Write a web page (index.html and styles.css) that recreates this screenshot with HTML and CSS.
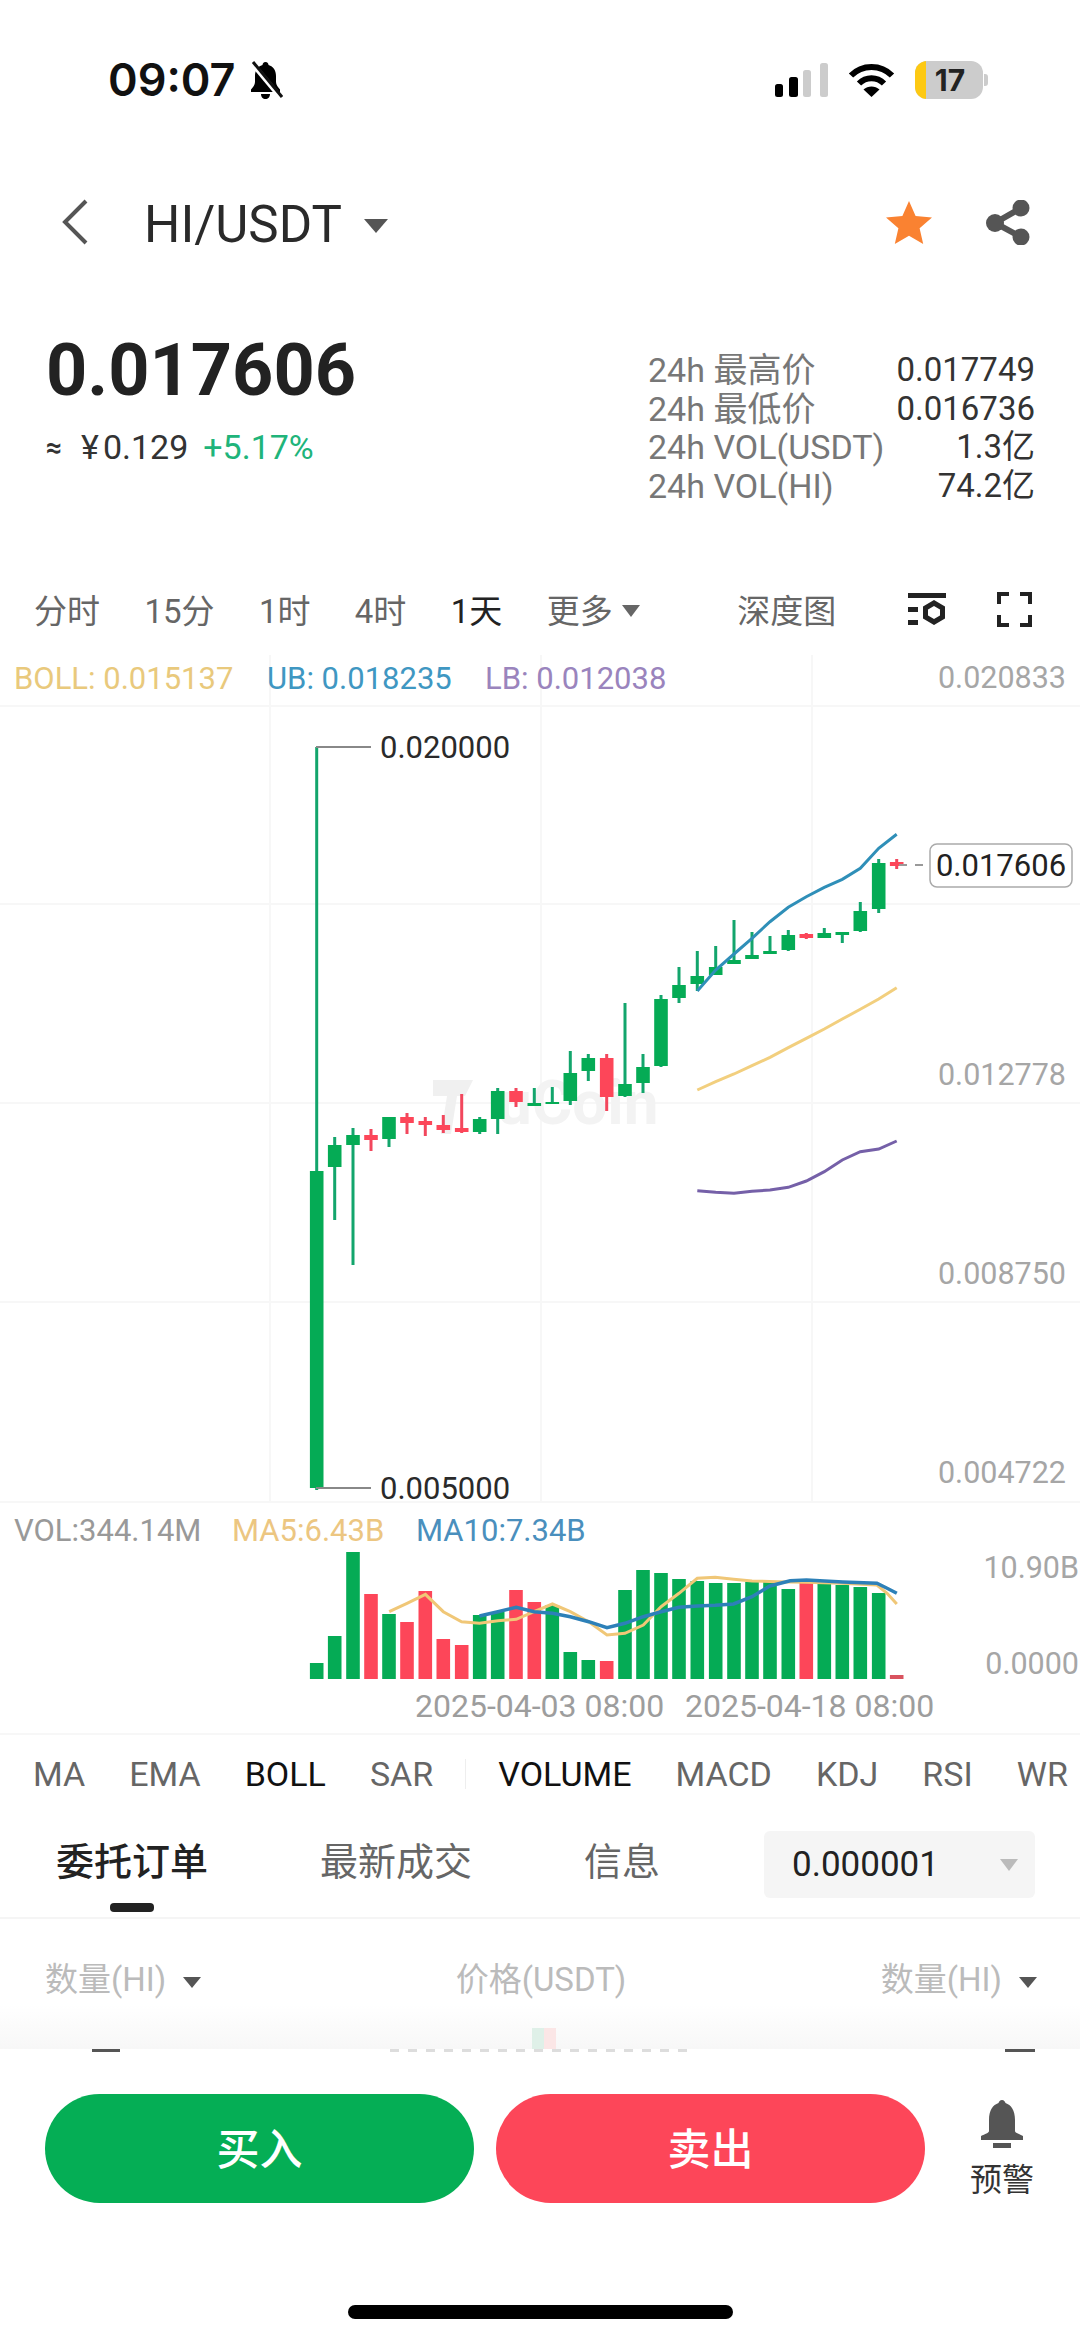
FILE: index.html
```html
<!DOCTYPE html>
<html lang="zh-CN">
<head>
  <meta charset="UTF-8">
  <meta name="viewport" content="width=device-width, initial-scale=1.0">
  <title>HI/USDT</title>
  <link rel="stylesheet" href="styles.css">
</head>
<body>
  <!-- Status bar -->
  <div class="status-bar">
    <span class="clock">09:07</span>
    <svg class="bell-off" viewBox="0 0 35 38">
      <path d="M17.5 1c2 0 3 1.500 3 3 5 1.500 7.500 5.500 7.500 11v6c0 3 2 5 4 7.500v2.500H3v-2.500C5 26 7 24 7 21v-6C7 9.500 9.500 5.500 14.500 4c0-1.500 1-3 3-3zM13 33h9c0 3-2 5-4.500 5S13 36 13 33z"/>
      <path class="bell-cut" d="M3 1l30 36"/>
      <path class="bell-line" d="M5 1l29 35"/>
    </svg>
    <div class="status-right">
      <svg class="signal" viewBox="0 0 53 34">
        <rect x="0" y="21" width="8" height="13" rx="2.500"/>
        <rect x="14" y="14" width="9" height="20" rx="2.500"/>
        <rect class="signal-off" x="28" y="7" width="8" height="27" rx="2.500"/>
        <rect class="signal-off" x="45" y="0" width="8" height="34" rx="2.500"/>
      </svg>
      <svg class="wifi" viewBox="0 0 47 34">
        <path class="wifi-arc" d="M3 12.500C14 1 33 1 44 12.500"/>
        <path class="wifi-arc" d="M11 20.500c7-7 18-7 25 0"/>
        <path d="M15.500 26.500c4.500-4 11.500-4 16 0L23.500 34z"/>
      </svg>
      <div class="battery">
        <span class="battery-level"></span>
        <span class="battery-text">17</span>
      </div>
      <span class="battery-nub"></span>
    </div>
  </div>

  <!-- Pair header -->
  <div class="nav-bar">
    <svg class="back-icon" viewBox="0 0 26 46"><path d="M24 2L3 23l21 21"/></svg>
    <span class="pair-name">HI/USDT</span>
    <span class="caret caret-pair"></span>
    <svg class="star-icon" viewBox="0 0 46 43"><path d="M23 0l6.600 15 16.400 1.500-12.400 10.800L37.200 43 23 34.700 8.800 43l3.600-15.700L0 16.500 16.400 15z"/></svg>
    <svg class="share-icon" viewBox="0 0 45 45">
      <path class="share-line" d="M35 8L9 23l26 14"/>
      <circle cx="35" cy="8" r="8.500"/>
      <circle cx="9" cy="23" r="9"/>
      <circle cx="35" cy="37" r="8.500"/>
    </svg>
  </div>

  <!-- Price summary -->
  <div class="ticker">
    <div class="ticker-main">
      <div class="last-price">0.017606</div>
      <div class="price-sub">
        <span class="approx">≈</span>
        <span class="yen">¥</span>
        <span class="cny">0.129</span>
        <span class="change">+5.17%</span>
      </div>
    </div>
    <div class="ticker-stats">
      <div class="stat-row"><span>24h 最高价</span><b>0.017749</b></div>
      <div class="stat-row"><span>24h 最低价</span><b>0.016736</b></div>
      <div class="stat-row"><span>24h VOL(USDT)</span><b>1.3亿</b></div>
      <div class="stat-row"><span>24h VOL(HI)</span><b>74.2亿</b></div>
    </div>
  </div>

  <!-- Interval tabs -->
  <div class="interval-bar">
    <span>分时</span>
    <span>15分</span>
    <span>1时</span>
    <span>4时</span>
    <span class="active">1天</span>
    <span class="more">更多<i class="caret caret-more"></i></span>
    <span class="depth-link">深度图</span>
    <svg class="tune-icon" viewBox="0 0 38 32">
      <rect x="0" y="0" width="38" height="5"/>
      <rect x="0" y="14" width="10" height="5"/>
      <rect x="0" y="27" width="10" height="5"/>
      <path class="tune-hex" d="M26 12.500l8.500 5v9l-8.500 5-8.500-5v-9z" transform="translate(0 -2.500)"/>
    </svg>
    <svg class="full-icon" viewBox="0 0 35 35">
      <path d="M2 12V2h10M23 2h10v10M33 23v10H23M12 33H2V23"/>
    </svg>
  </div>

  <!-- Price chart -->
  <svg class="price-chart" viewBox="0 650 1080 860">
    <path class="grid" d="M0 706H1080M0 904H1080M0 1103H1080M0 1302H1080M0 1502H1080M270 655V1502M541 655V1502M812 655V1502"/>

    <text class="wm-text" x="497" y="1124">uCoin</text>
    <path class="wm-logo" d="M433 1080h40l-8 16h-8l-6 38h-10l6-38h-14z"/>

    <text class="legend boll" x="14" y="678">BOLL: 0.015137</text>
    <text class="legend ub" x="267" y="678">UB: 0.018235</text>
    <text class="legend lb" x="485" y="678">LB: 0.012038</text>

    <text class="axis" x="1066" y="677">0.020833</text>
    <text class="axis" x="1066" y="1074">0.012778</text>
    <text class="axis" x="1066" y="1273">0.008750</text>
    <text class="axis" x="1066" y="1472">0.004722</text>

    <path class="wick up" d="M316.700 747V1490M334.700 1137V1220M353 1128V1265M389 1117V1147M479.700 1117V1134M497.700 1088V1134M534.300 1088V1106M552.300 1087V1104M570.300 1051V1105M588.300 1054V1081M625 1003V1097M643 1054V1093M661 995V1067M679 967V1003M697.300 951V991M715.700 946V975M734 920V964M752 932V959M770 936V954M788.300 930V951M824.300 928V938M842.300 932V943M860.300 902V932M878.700 859V913"/>
    <path class="body up" d="M316.700 1171V1488M334.700 1145V1167M353 1135V1145M389 1117V1139M479.700 1119V1132M497.700 1091V1119M534.300 1103V1106M552.300 1102V1104M570.300 1073V1101M588.300 1058V1071M625 1084V1096M643 1067V1083M661 999V1066M679 985V998M697.300 976V984M715.700 967V975M734 960V964M752 955V959M770 951V954M788.300 935V950M824.300 933V938M842.300 932V935M860.300 911V931M878.700 863V909"/>
    <path class="wick down" d="M371 1129V1151M407 1113V1134M425.300 1117V1136M443.300 1115V1133M461.700 1094V1133M516 1088V1107M606.700 1054V1111M806.300 933V939M896.700 859V869"/>
    <path class="body down" d="M371 1135V1140M407 1117V1123M425.300 1121V1125M443.300 1125V1130M461.700 1128V1132M516 1091V1102M606.700 1058V1097M806.300 934V938M896.700 862V866"/>

    <polyline class="line line-ub" points="697.300,991 715.700,970 734,954 752,938.300 770,921.700 788.300,907.300 806.300,896.700 824.300,887.300 842.300,879.300 860.300,868.300 878.700,848.300 896.700,834.300"/>
    <polyline class="line line-boll" points="697.300,1090 715.700,1081.700 734,1074 752,1065.700 770,1057.300 788.300,1047.700 806.300,1038.300 824.300,1029 842.300,1019 860.300,1009.300 878.700,999 896.700,987.700"/>
    <polyline class="line line-lb" points="697.300,1190.700 715.700,1192.300 734,1193.300 752,1191.300 770,1190 788.300,1187.300 806.300,1181 824.300,1171.700 842.300,1160 860.300,1151.700 878.700,1149 896.700,1141"/>

    <!-- high and low marks -->
    <path class="mark-line" d="M316 747H371M316 1488H371"/>
    <text class="mark-text" x="380" y="747">0.020000</text>
    <text class="mark-text" x="380" y="1488">0.005000</text>

    <!-- last price tag -->
    <path class="last-line" d="M899 865H930"/>
    <rect class="last-box" x="930" y="844" width="142" height="43" rx="7"/>
    <text class="last-text" x="1001" y="865.500">0.017606</text>
  </svg>

  <!-- Volume chart -->
  <svg class="volume-chart" viewBox="0 1510 1080 223">
    <text class="legend vol" x="14" y="1530">VOL:344.14M</text>
    <text class="legend ma5" x="232" y="1530">MA5:6.43B</text>
    <text class="legend ma10" x="416" y="1530">MA10:7.34B</text>

    <text class="axis" x="1079" y="1567">10.90B</text>
    <text class="axis" x="1079" y="1663">0.0000</text>

    <path class="bar up" d="M316.700 1663V1679M334.700 1636V1679M353 1552V1679M389 1614V1679M479.700 1615V1679M497.700 1612V1679M552.300 1605V1679M570.300 1652V1679M588.300 1660V1679M625 1590V1679M643 1570V1679M661 1573V1679M679 1579V1679M697.300 1581V1679M715.700 1583V1679M734 1583V1679M752 1582V1679M770 1582V1679M788.300 1589V1679M824.300 1584V1679M842.300 1585V1679M860.300 1587V1679M878.700 1593V1679"/>
    <path class="bar down" d="M371 1594V1679M407 1622V1679M425.300 1591V1679M443.300 1639V1679M461.700 1645V1679M516 1590V1679M534.300 1602V1679M606.700 1661V1679M806.300 1583V1679"/>
    <path class="bar last-bar" d="M896.700 1675V1679"/>

    <polyline class="line line-ma5" points="389.200,1611.700 407,1603.300 425.400,1594.300 443.300,1611.700 461.600,1621.700 479.500,1623.300 497.900,1620.700 516.200,1619.300 534.100,1611.700 552.400,1604 570.300,1611.700 588.700,1621.700 607,1635 624.900,1633.300 643.300,1625 661.100,1606.700 679,1593.300 697.300,1578.300 715.200,1577.300 733.600,1579.300 752,1581 777.400,1581.700 805.500,1582.300 841.200,1583.300 876.900,1585 887.100,1593.300 896.800,1604"/>
    <polyline class="line line-ma10" points="479.500,1616 497.900,1611.700 516.200,1607.300 534.100,1611.700 552.400,1613.300 570.300,1616.700 588.700,1621.700 607,1627.700 624.900,1623.300 643.300,1616.700 661.100,1611.700 679,1607.300 697.300,1606 715.200,1605.300 733.600,1604 752,1596.700 769.800,1586 790.200,1580.700 806.500,1580 824.400,1581 842.800,1582 876.900,1583.300 887.100,1588.300 896.800,1593.300"/>

    <text class="date" x="415" y="1706">2025-04-03 08:00</text>
    <text class="date" x="685" y="1706">2025-04-18 08:00</text>
  </svg>

  <!-- Indicator tabs -->
  <div class="indicator-bar">
    <span>MA</span>
    <span>EMA</span>
    <span class="active">BOLL</span>
    <span>SAR</span>
    <i class="indicator-sep"></i>
    <span class="active">VOLUME</span>
    <span>MACD</span>
    <span>KDJ</span>
    <span>RSI</span>
    <span>WR</span>
  </div>

  <!-- Order book -->
  <div class="book-tabs">
    <span class="book-tab active">委托订单</span>
    <span class="book-tab">最新成交</span>
    <span class="book-tab">信息</span>
    <div class="step-select">
      <span>0.000001</span>
      <i class="caret caret-step"></i>
    </div>
  </div>

  <div class="book-head">
    <span class="book-col">数量(HI)<i class="caret caret-col"></i></span>
    <span class="book-col">价格(USDT)</span>
    <span class="book-col">数量(HI)<i class="caret caret-col"></i></span>
  </div>

  <div class="book-fade">
    <i class="depth-green"></i><i class="depth-red"></i>
  </div>
  <div class="book-peek">
    <i class="peek-left"></i>
    <i class="peek-mid"></i>
    <i class="peek-right"></i>
  </div>

  <!-- Bottom actions -->
  <div class="actions">
    <button class="trade-btn buy">买入</button>
    <button class="trade-btn sell">卖出</button>
    <div class="alert">
      <svg class="alert-bell" viewBox="0 0 44 48">
        <path d="M22 0c2 0 3 1.500 3.500 3C31 5 35 10 35 20v11c0 2 4 3 8 5v4H1v-4c4-2 8-3 8-5V20C9 10 13 5 18.500 3 19 1.500 20 0 22 0z"/>
        <rect x="13" y="43" width="18" height="5"/>
      </svg>
      <span class="alert-label">预警</span>
    </div>
  </div>

  <div class="home-bar"></div>
</body>
</html>
```

FILE: styles.css
```css
* {
  box-sizing: border-box;
}

body {
  margin: 0;
  width: 1080px;
  height: 2341px;
  overflow: hidden;
  background-color: white;
  color: #222;
  font-family: Roboto, "Noto Sans CJK SC", sans-serif;
}

i {
  display: block;
}

/* Small triangle used all over the page */
.caret {
  display: inline-block;
  width: 0;
  height: 0;
  border-style: solid;
  border-color: #555 transparent transparent transparent;
}

/* Status bar */
.status-bar {
  height: 160px;
  display: flex;
  align-items: center;
  padding-left: 108px;
}

.clock {
  font-family: Inter, sans-serif;
  font-size: 45px;
  font-weight: 600;
  color: #111;
  line-height: 50px;
}

.bell-off {
  width: 35px;
  height: 38px;
  margin-left: 12px;
}

.bell-cut {
  stroke: white;
  stroke-width: 5;
}

.bell-line {
  stroke: #111;
  stroke-width: 3;
}

.status-right {
  display: flex;
  align-items: center;
  margin-left: auto;
  padding-right: 92px;
}

.signal {
  width: 53px;
  height: 34px;
}

.signal-off {
  fill: #ccc;
}

.wifi {
  width: 47px;
  height: 34px;
  margin-left: 20px;
}

.wifi-arc {
  fill: none;
  stroke: #000;
  stroke-width: 6;
}

.battery {
  position: relative;
  width: 68px;
  height: 38px;
  margin-left: 20px;
  border-radius: 12px;
  background-color: #ccc;
  overflow: hidden;
  text-align: center;
}

.battery-level {
  position: absolute;
  left: 0;
  top: 0;
  width: 11px;
  height: 100%;
  background-color: #fdc913;
}

.battery-text {
  position: relative;
  font-family: Inter, sans-serif;
  font-size: 30px;
  font-weight: 700;
  line-height: 38px;
  color: #222;
  margin-left: 2px;
}

.battery-nub {
  width: 4px;
  height: 12px;
  margin-left: 1px;
  border-radius: 0 3px 3px 0;
  background-color: #ccc;
}

/* Pair header */
.nav-bar {
  height: 124px;
  display: flex;
  align-items: center;
  padding-left: 62px;
  padding-right: 49px;
}

.back-icon {
  width: 26px;
  height: 46px;
}

.back-icon path {
  fill: none;
  stroke: #555;
  stroke-width: 4;
}

.pair-name {
  margin-left: 56px;
  margin-top: 4px;
  font-size: 51px;
  color: #2a2a2a;
}

.caret-pair {
  margin-left: 22px;
  margin-top: 8px;
  border-width: 14px 12px 0 12px;
}

.star-icon {
  width: 46px;
  height: 43px;
  margin-left: auto;
  fill: #fa8231;
}

.share-icon {
  width: 45px;
  height: 45px;
  margin-left: 54px;
  fill: #555;
}

.share-line {
  fill: none;
  stroke: #555;
  stroke-width: 6;
}

/* Price summary */
.ticker {
  height: 286px;
  display: flex;
  justify-content: space-between;
  padding: 66px 45px 0 46px;
}

.last-price {
  font-size: 72px;
  font-weight: 700;
  line-height: 42px;
  color: #222;
}

.price-sub {
  display: flex;
  align-items: center;
  height: 38px;
  margin-top: 36px;
  font-size: 34px;
  color: #333;
}

.approx {
  width: 35px;
  font-size: 28px;
  font-weight: 700;
}

.yen {
  margin-right: 4px;
}

.change {
  margin-left: 15px;
  color: #20b47a;
}

.ticker-stats {
  width: 387px;
  margin-top: 1px;
  font-size: 34px;
  line-height: 38.700px;
  color: #777;
}

.stat-row {
  display: flex;
  justify-content: space-between;
}

.stat-row b {
  font-size: 33px;
  font-weight: 400;
  color: #333;
}

/* Interval tabs */
.interval-bar {
  height: 80px;
  display: flex;
  align-items: center;
  gap: 44.400px;
  padding-left: 34px;
  padding-right: 48px;
  padding-bottom: 2px;
  font-size: 33px;
  color: #666;
}

.interval-bar .active {
  color: #222;
}

.more {
  display: flex;
  align-items: center;
}

.caret-more {
  margin-left: 9px;
  margin-top: 4px;
  border-width: 12px 9px 0 9px;
  border-top-color: #666;
}

.depth-link {
  margin-left: auto;
  margin-right: 27px;
}

.tune-icon {
  width: 38px;
  height: 32px;
  fill: #222;
  margin-right: 7px;
}

.tune-hex {
  fill: none;
  stroke: #222;
  stroke-width: 5;
}

.full-icon {
  width: 35px;
  height: 35px;
}

.full-icon path {
  fill: none;
  stroke: #222;
  stroke-width: 4;
}

/* Charts */
.price-chart {
  display: block;
  width: 1080px;
  height: 860px;
}

.volume-chart {
  display: block;
  width: 1080px;
  height: 223px;
}

.price-chart text,
.volume-chart text {
  font-family: Roboto, sans-serif;
  font-size: 31px;
  dominant-baseline: central;
}

.grid {
  fill: none;
  stroke: #f7f7f7;
  stroke-width: 2;
}

.price-chart .wm-text {
  font-size: 62px;
  font-weight: 700;
  fill: #f3f3f3;
  dominant-baseline: auto;
}

.wm-logo {
  fill: #f0f0f0;
}

.boll { fill: #e9c97c; }
.ub { fill: #3f97c2; }
.lb { fill: #9a84bd; }
.vol { fill: #999; }
.ma5 { fill: #ecc681; }
.ma10 { fill: #4a8fbd; }

.price-chart .axis,
.volume-chart .axis {
  fill: #a6a6a6;
  font-size: 30.500px;
  text-anchor: end;
}

.wick {
  fill: none;
  stroke-width: 3;
}

.body,
.bar {
  fill: none;
  stroke-width: 13.600;
}

.wick.up { stroke: #13a56c; }
.wick.down { stroke: #f2475d; }
.body.up,
.bar.up { stroke: #05ab55; }
.body.down,
.bar.down { stroke: #fd4659; }
.last-bar { stroke: #d9535f; }

.line {
  fill: none;
  stroke-width: 3;
}

.line-ub { stroke: #2f8fb8; }
.line-boll { stroke: #f2cf7e; }
.line-lb { stroke: #7560a8; }
.line-ma5 { stroke: #f0c777; }
.line-ma10 { stroke: #2d80b8; stroke-width: 3.500; }

.mark-line {
  fill: none;
  stroke: #888;
  stroke-width: 2;
}

.price-chart .mark-text {
  fill: #2a2a2a;
}

.last-line {
  fill: none;
  stroke: #999;
  stroke-width: 2;
  stroke-dasharray: 8 8;
}

.last-box {
  fill: white;
  stroke: #aaa;
  stroke-width: 1.500;
}

.price-chart .last-text {
  fill: #222;
  text-anchor: middle;
}

.volume-chart .date {
  fill: #9d9d9d;
  font-size: 32px;
}

/* Indicator tabs */
.indicator-bar {
  height: 79px;
  display: flex;
  align-items: center;
  gap: 44px;
  padding-left: 33px;
  border-top: 2px solid #f7f7f7;
  font-size: 34px;
  color: #666;
}

.indicator-bar .active {
  color: #111;
}

.indicator-sep {
  width: 1px;
  height: 30px;
  margin: 0 -12px;
  background-color: #eee;
}

/* Order book */
.book-tabs {
  position: relative;
  height: 107px;
  display: flex;
  align-items: flex-start;
  gap: 112px;
  padding-left: 56px;
  padding-top: 21px;
  border-bottom: 2px solid #f5f5f5;
  font-size: 38px;
  color: #666;
}

.book-tab {
  line-height: 58px;
}

.book-tab.active {
  position: relative;
  color: #222;
  font-weight: 500;
}

.book-tab.active::after {
  content: "";
  position: absolute;
  left: 54px;
  bottom: -21px;
  width: 44px;
  height: 9px;
  border-radius: 4px;
  background-color: #222;
}

.step-select {
  position: absolute;
  left: 764px;
  top: 19px;
  width: 271px;
  height: 67px;
  display: flex;
  align-items: center;
  justify-content: space-between;
  padding: 0 17px 0 28px;
  border-radius: 6px;
  background-color: #f5f5f5;
  font-size: 35px;
  color: #222;
}

.caret-step {
  border-width: 12px 9px 0 9px;
  border-top-color: #bbb;
}

.book-head {
  height: 86px;
  display: flex;
  justify-content: space-between;
  align-items: flex-end;
  padding: 0 43px 0 45px;
  font-size: 33px;
  color: #bbb;
}

.book-col {
  display: flex;
  align-items: center;
  line-height: 50px;
}

.caret-col {
  margin-left: 17px;
  margin-top: 4px;
  border-width: 11px 9px 0 9px;
}

.book-fade {
  height: 44px;
  display: flex;
  justify-content: center;
  align-items: flex-end;
  background: linear-gradient(#fff, #f7f7f7);
  padding-left: 8px;
}

.depth-green,
.depth-red {
  width: 12px;
  height: 21px;
}

.depth-green { background-color: #dff0e8; }
.depth-red { background-color: #fbe6e6; }

.book-peek {
  height: 3px;
  display: flex;
}

.peek-left {
  width: 28px;
  margin-left: 92px;
  background-color: #555;
}

.peek-mid {
  width: 300px;
  margin-left: 270px;
  background: repeating-linear-gradient(90deg, #ddd 0 9px, transparent 9px 18px);
}

.peek-right {
  width: 30px;
  margin-left: auto;
  margin-right: 45px;
  background-color: #555;
}

/* Bottom actions */
.actions {
  height: 253px;
  display: flex;
  align-items: flex-start;
  padding: 42px 0 0 45px;
}

.trade-btn {
  width: 429px;
  height: 109px;
  padding-bottom: 6px;
  border: none;
  border-radius: 55px;
  color: white;
  font-family: "Noto Sans CJK SC", sans-serif;
  font-size: 43px;
  font-weight: 500;
}

.buy {
  background-color: #05ae55;
}

.sell {
  margin-left: 22px;
  background-color: #fd4659;
}

.alert {
  display: flex;
  flex-direction: column;
  align-items: center;
  width: 64px;
  margin-left: 45px;
  padding-top: 6px;
  font-size: 32px;
  line-height: 40px;
  color: #333;
}

.alert-bell {
  width: 44px;
  height: 48px;
  margin-bottom: 12px;
  fill: #555;
}

.alert-label {
  white-space: nowrap;
}

.home-bar {
  width: 385px;
  height: 14px;
  margin: 0 auto;
  border-radius: 7px;
  background-color: #000;
}
```
